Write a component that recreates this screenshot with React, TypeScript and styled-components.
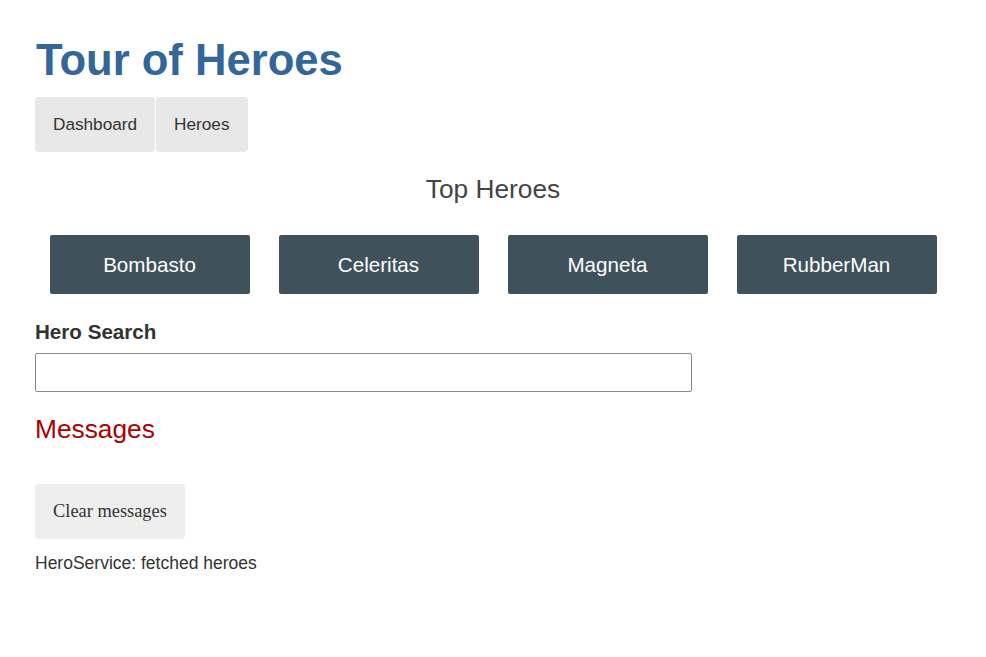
import React from "react";
import styled, { createGlobalStyle } from "styled-components";

const GlobalStyle = createGlobalStyle`
  html, body { margin: 0; padding: 0; background: #fff; }
  body { font-family: "Liberation Sans", Arial, sans-serif; color: #333; }
  * { box-sizing: border-box; }
`;

const Page = styled.div`
  padding: 0 35px;
  display: flex;
  flex-direction: column;
  align-items: stretch;
`;

const Title = styled.h1`
  margin: 36px 0 0 1px;
  color: #336699;
  font-family: "Liberation Sans", Arial, sans-serif;
  font-size: 43.6px;
  font-weight: bold;
  line-height: normal;
`;

const Nav = styled.nav`
  display: flex;
  gap: 1px;
  margin-top: 12px;
`;

const NavButton = styled.a`
  display: block;
  background: #e8e8e8;
  color: #333;
  border-radius: 4px;
  padding: 17.2px 18px;
  font-size: 17.2px;
  line-height: normal;
  text-decoration: none;
  cursor: pointer;
`;

const SectionTitle = styled.h2<{ $center?: boolean; $color?: string; $top: number }>`
  margin: ${(p) => p.$top}px 0 0;
  text-align: ${(p) => (p.$center ? "center" : "left")};
  color: ${(p) => p.$color ?? "#444"};
  font-family: "Liberation Sans", Arial, sans-serif;
  font-size: 26.3px;
  font-weight: normal;
  line-height: normal;
`;

const HeroGrid = styled.div`
  display: grid;
  grid-template-columns: repeat(4, 1fr);
  margin-top: 30px;
`;

const HeroCell = styled.div`
  display: flex;
  justify-content: center;
`;

const HeroButton = styled.a`
  width: 200px;
  height: 59px;
  display: flex;
  align-items: center;
  justify-content: center;
  background: #3f525c;
  color: #fff;
  border-radius: 2px;
  font-size: 20.6px;
  text-decoration: none;
`;

const SearchBox = styled.div`
  display: flex;
  flex-direction: column;
  margin-top: 26px;
`;

const SearchLabel = styled.label`
  font-size: 20.6px;
  font-weight: bold;
  line-height: normal;
  color: #333;
`;

const SearchInput = styled.input`
  margin-top: 9px;
  width: 657px;
  height: 39px;
  border: 1px solid #8a8a8a;
  border-radius: 2px;
  font-size: 17.2px;
  padding: 0 8px;
  outline: none;
`;

const ClearButton = styled.button`
  align-self: flex-start;
  margin-top: 39px;
  height: 55px;
  padding: 0 18px;
  background: #eeeeee;
  border: none;
  border-radius: 4px;
  color: #333;
  font-family: "Liberation Serif", "Times New Roman", serif;
  font-size: 18.4px;
  cursor: pointer;
`;

const Message = styled.div`
  margin-top: 14px;
  font-size: 17.5px;
  line-height: normal;
  color: #333;
`;

const heroes = ["Bombasto", "Celeritas", "Magneta", "RubberMan"];

export default function App() {
  return (
    <>
      <GlobalStyle />
      <Page>
        <Title>Tour of Heroes</Title>
        <Nav>
          <NavButton>Dashboard</NavButton>
          <NavButton>Heroes</NavButton>
        </Nav>
        <SectionTitle $center $top={22}>Top Heroes</SectionTitle>
        <HeroGrid>
          {heroes.map((h) => (
            <HeroCell key={h}>
              <HeroButton>{h}</HeroButton>
            </HeroCell>
          ))}
        </HeroGrid>
        <SearchBox>
          <SearchLabel htmlFor="search-box">Hero Search</SearchLabel>
          <SearchInput id="search-box" type="text" />
        </SearchBox>
        <SectionTitle $color="#aa0000" $top={22}>Messages</SectionTitle>
        <ClearButton>Clear messages</ClearButton>
        <Message>HeroService: fetched heroes</Message>
      </Page>
    </>
  );
}
